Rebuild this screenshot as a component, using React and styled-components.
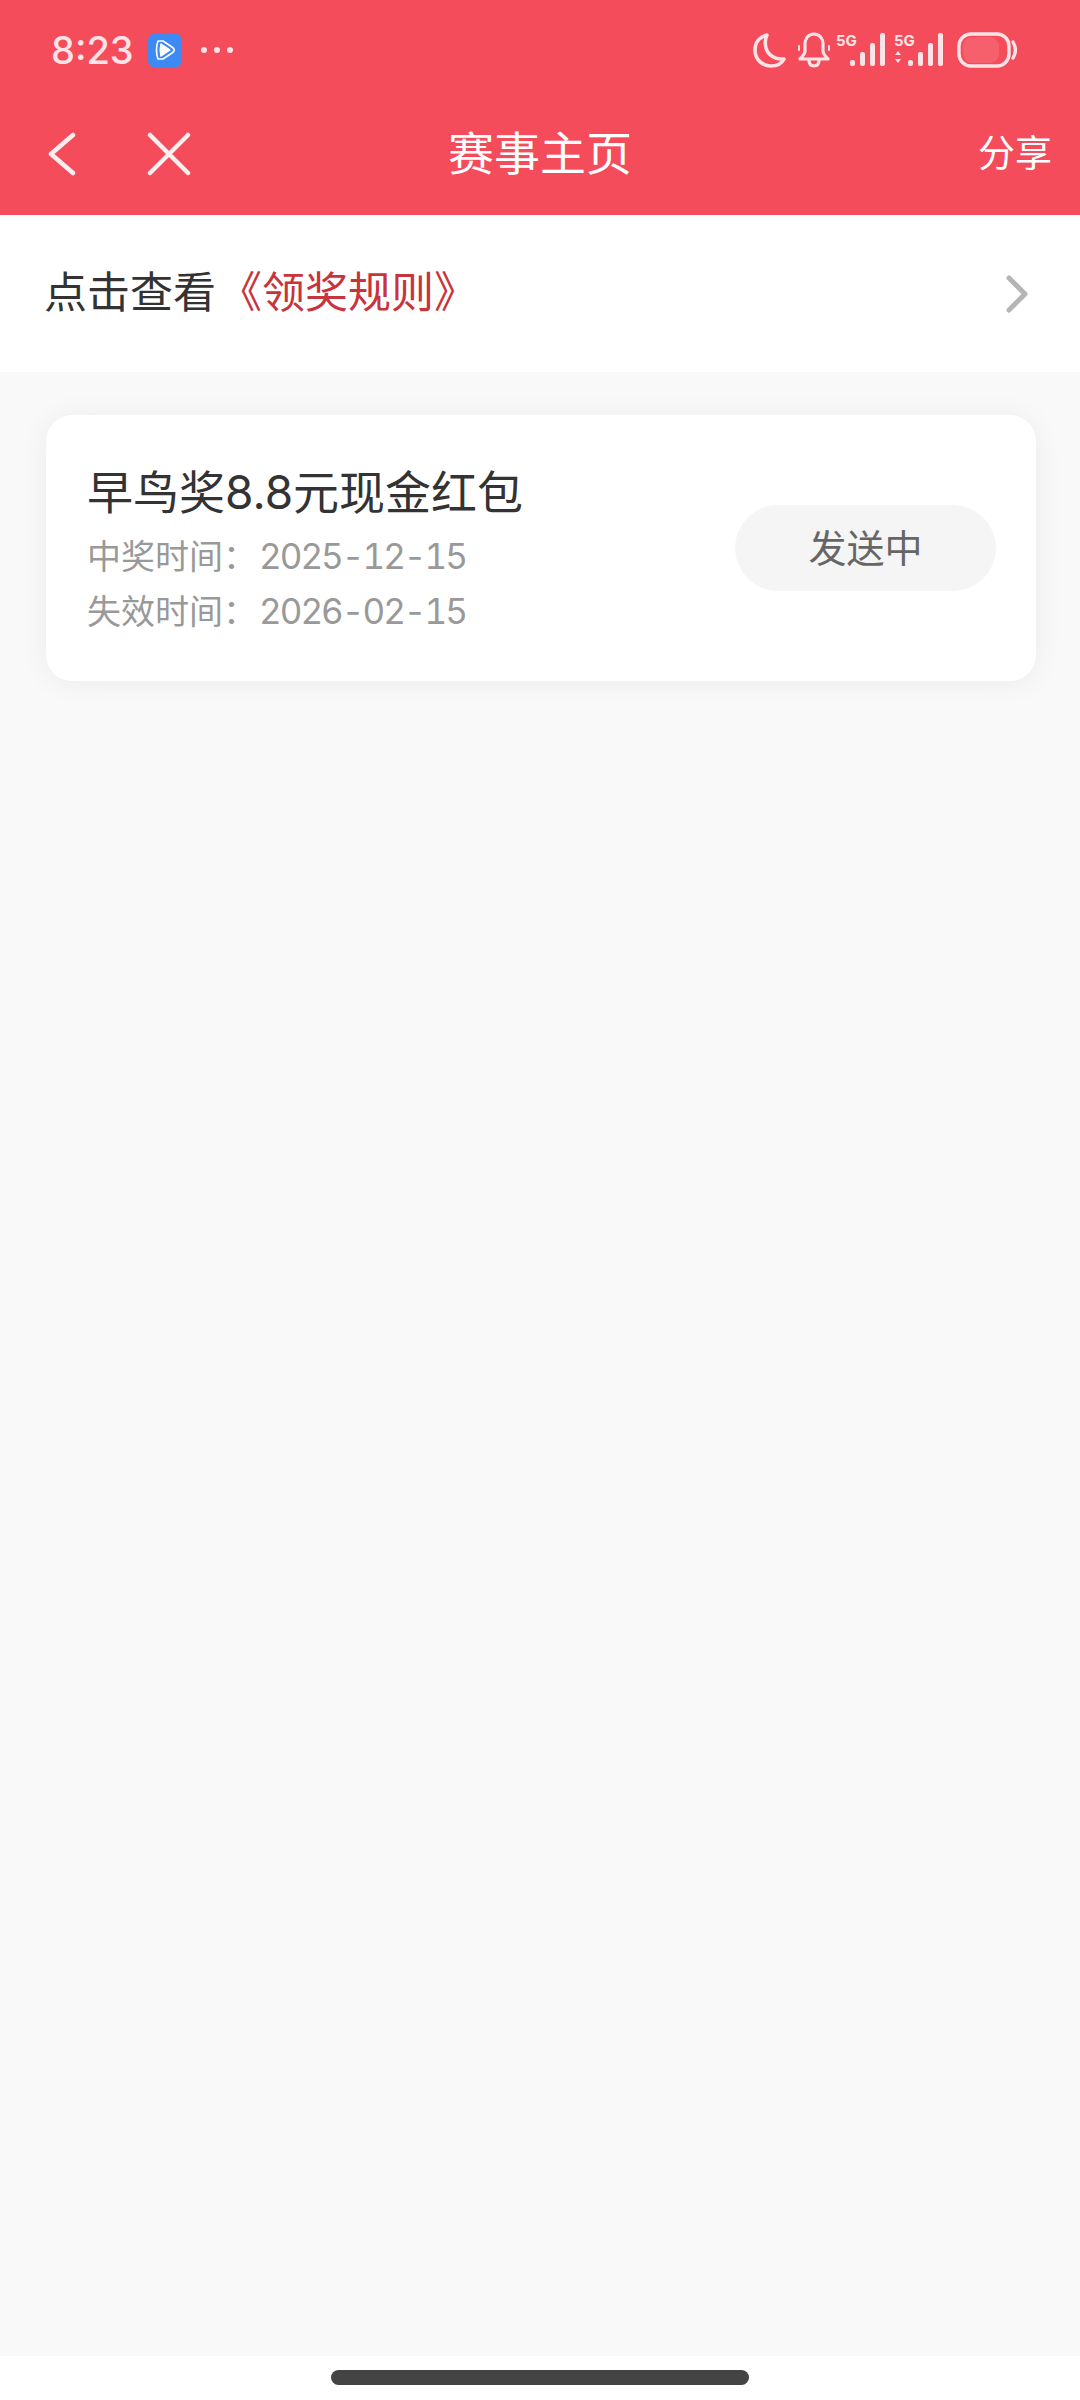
import React from 'react';
import styled, { createGlobalStyle } from 'styled-components';

const GlobalStyle = createGlobalStyle`
  html, body {
    margin: 0;
    padding: 0;
    background: #f9f9f9;
  }
  * {
    box-sizing: border-box;
  }
`;

const Page = styled.div`
  width: 1080px;
  height: 2400px;
  display: flex;
  flex-direction: column;
  background: #f9f9f9;
  font-family: Inter, "Noto Sans CJK SC", sans-serif;
  overflow: hidden;
`;

const Header = styled.header`
  background: #f44c5b;
  height: 215px;
  color: #fff;
  flex-shrink: 0;
`;

const StatusBar = styled.div`
  height: 100px;
  display: flex;
  align-items: center;
  justify-content: space-between;
  padding: 0 63px 0 51px;
`;

const StatusLeft = styled.div`
  display: flex;
  align-items: center;
`;

const Clock = styled.span`
  font-size: 38px;
  font-weight: 500;
  color: #fde3e6;
  width: 97px;
`;

const AppBadge = styled.div`
  width: 34px;
  height: 35px;
  border-radius: 8px;
  background: #3d8af5;
  display: flex;
  align-items: center;
  justify-content: center;
`;

const Dots = styled.div`
  display: flex;
  gap: 7px;
  margin-left: 19px;
`;

const Dot = styled.i`
  width: 6px;
  height: 6px;
  border-radius: 50%;
  background: #fde3e6;
`;

const StatusRight = styled.div`
  display: flex;
  align-items: center;
`;

const StatusIcon = styled.span`
  display: flex;
  margin-left: ${p => p.$gap || 0}px;
`;

const NavBar = styled.nav`
  height: 115px;
  display: grid;
  grid-template-columns: 1fr auto 1fr;
  align-items: center;
  padding: 0 28px 8px;
`;

const NavLeft = styled.div`
  display: flex;
  align-items: center;
  gap: 71px;
  margin-left: 20px;
`;

const NavTitle = styled.h1`
  margin: 0 0 2px;
  font-size: 46px;
  font-weight: 400;
  line-height: 1;
  color: #fff;
`;

const ShareLink = styled.span`
  justify-self: end;
  font-size: 37px;
  line-height: 1;
  color: #fff;
`;

const RulesRow = styled.div`
  height: 157px;
  background: #fff;
  display: flex;
  align-items: center;
  justify-content: space-between;
  padding: 0 52px 0 44px;
  flex-shrink: 0;
`;

const RulesText = styled.div`
  font-size: 43px;
  line-height: 1;
  color: #333;
  margin-bottom: 2px;
`;

const RulesLink = styled.span`
  color: #c8343c;
  margin-left: 3px;
`;

const Content = styled.main`
  flex: 1;
  padding: 43px 44px 0 46px;
`;

const PrizeCard = styled.section`
  height: 266px;
  background: #fff;
  border-radius: 26px;
  box-shadow: 0 2px 30px rgba(0, 0, 0, 0.06);
  display: flex;
  align-items: center;
  justify-content: space-between;
  padding: 0 40px 0 41px;
`;

const PrizeInfo = styled.div`
  display: flex;
  flex-direction: column;
  padding-top: 5px;
`;

const PrizeName = styled.div`
  font-size: 46px;
  line-height: 60px;
  color: #333;
  margin-bottom: 7px;
`;

const PrizeDate = styled.div`
  font-size: 34px;
  line-height: 55px;
  color: #999;
`;

const DateValue = styled.span`
  font-size: 35px;
  font-variant-numeric: tabular-nums;
  letter-spacing: -2px;
  margin-left: 2px;
`;

const StatusPill = styled.div`
  width: 261px;
  height: 86px;
  border-radius: 43px;
  background: #f5f5f5;
  color: #666;
  font-size: 38px;
  display: flex;
  align-items: center;
  justify-content: center;
  padding-bottom: 5px;
`;

const HomeArea = styled.div`
  height: 44px;
  background: #fff;
  display: flex;
  justify-content: center;
  padding-top: 14px;
  flex-shrink: 0;
`;

const HomeBar = styled.div`
  width: 418px;
  height: 15px;
  border-radius: 8px;
  background: #444;
`;

const Moon = () => (
  <svg width="33" height="36" viewBox="0 0 33 36" fill="none" stroke="#fde3e6" strokeWidth="3.6" strokeLinejoin="round">
    <path d="M14 3C6 5 2 11 2 18c0 9 7 16 16 16 6 0 11-3 13-7-9 1-16-4-18-11-1-4-1-9 1-13z" />
  </svg>
);

const Bell = () => (
  <svg width="36" height="36" viewBox="0 0 36 36" fill="none" stroke="#fde3e6" strokeWidth="3.2" strokeLinejoin="round" strokeLinecap="round">
    <path d="M18 2c-6 0-9 5-9 10v7c0 3-2 5-5 8h28c-3-3-5-5-5-8v-7c0-5-3-10-9-10z" />
    <path d="M13 28c0 4 2 6 5 6s5-2 5-6" />
    <path d="M3 14v4M33 14v4" strokeWidth="2" />
  </svg>
);

const Signal = ({ arrows }) => (
  <svg width="50" height="36" viewBox="0 0 50 36" fill="#fde3e6">
    <text x="0" y="14" fontFamily="Inter, sans-serif" fontSize="15" fontWeight="700">5G</text>
    {arrows && <path d="M1 23l3-4 3 4zM1 27l3 4 3-4z" />}
    <rect x="14" y="28" width="5" height="6" rx="2" />
    <rect x="24" y="20" width="5" height="14" rx="2" />
    <rect x="34" y="11" width="5" height="23" rx="2" />
    <rect x="44" y="1" width="5" height="33" rx="2" />
  </svg>
);

const Battery = () => (
  <svg width="60" height="36" viewBox="0 0 60 36" fill="none">
    <rect x="6" y="5" width="36" height="26" rx="9" fill="#f6606d" />
    <rect x="2" y="2" width="50" height="32" rx="12" stroke="#fde3e6" strokeWidth="3.4" />
    <path d="M56 10c3 5 3 11 0 16" stroke="#fde3e6" strokeWidth="3.4" strokeLinecap="round" />
  </svg>
);

const BackIcon = () => (
  <svg width="28" height="44" viewBox="0 0 28 44" fill="none" stroke="#fdeef0" strokeWidth="4.5" strokeLinecap="round" strokeLinejoin="round">
    <path d="M25 3L3 22l22 19" />
  </svg>
);

const CloseIcon = () => (
  <svg width="44" height="44" viewBox="0 0 44 44" fill="none" stroke="#fdeef0" strokeWidth="4.5" strokeLinecap="round">
    <path d="M3 3l38 38M41 3L3 41" />
  </svg>
);

const ArrowIcon = () => (
  <svg width="22" height="38" viewBox="0 0 22 38" fill="none" stroke="#b5b5b5" strokeWidth="5" strokeLinecap="round" strokeLinejoin="round">
    <path d="M3 3l16 16L3 35" />
  </svg>
);

const PlayIcon = () => (
  <svg width="24" height="24" viewBox="0 0 24 24">
    <path d="M5 3h5l9 6c3 2 3 4 0 6l-9 6H5c-2-5-2-13 0-18z" fill="none" stroke="#fff" strokeWidth="1.6" strokeLinejoin="round" />
    <path d="M8 6l9 6-9 6c-1-4-1-8 0-12z" fill="#fff" stroke="#fff" strokeWidth="1.5" strokeLinejoin="round" />
  </svg>
);

export default function App() {
  return (
    <Page>
      <GlobalStyle />
      <Header>
        <StatusBar>
          <StatusLeft>
            <Clock>8:23</Clock>
            <AppBadge>
              <PlayIcon />
            </AppBadge>
            <Dots>
              <Dot />
              <Dot />
              <Dot />
            </Dots>
          </StatusLeft>
          <StatusRight>
            <StatusIcon><Moon /></StatusIcon>
            <StatusIcon $gap={10}><Bell /></StatusIcon>
            <StatusIcon $gap={4}><Signal /></StatusIcon>
            <StatusIcon $gap={8}><Signal arrows /></StatusIcon>
            <StatusIcon $gap={13}><Battery /></StatusIcon>
          </StatusRight>
        </StatusBar>
        <NavBar>
          <NavLeft>
            <BackIcon />
            <CloseIcon />
          </NavLeft>
          <NavTitle>赛事主页</NavTitle>
          <ShareLink>分享</ShareLink>
        </NavBar>
      </Header>
      <RulesRow>
        <RulesText>
          点击查看<RulesLink>《领奖规则》</RulesLink>
        </RulesText>
        <ArrowIcon />
      </RulesRow>
      <Content>
        <PrizeCard>
          <PrizeInfo>
            <PrizeName>早鸟奖8.8元现金红包</PrizeName>
            <PrizeDate>中奖时间：<DateValue>2025-12-15</DateValue></PrizeDate>
            <PrizeDate>失效时间：<DateValue>2026-02-15</DateValue></PrizeDate>
          </PrizeInfo>
          <StatusPill>发送中</StatusPill>
        </PrizeCard>
      </Content>
      <HomeArea>
        <HomeBar />
      </HomeArea>
    </Page>
  );
}
